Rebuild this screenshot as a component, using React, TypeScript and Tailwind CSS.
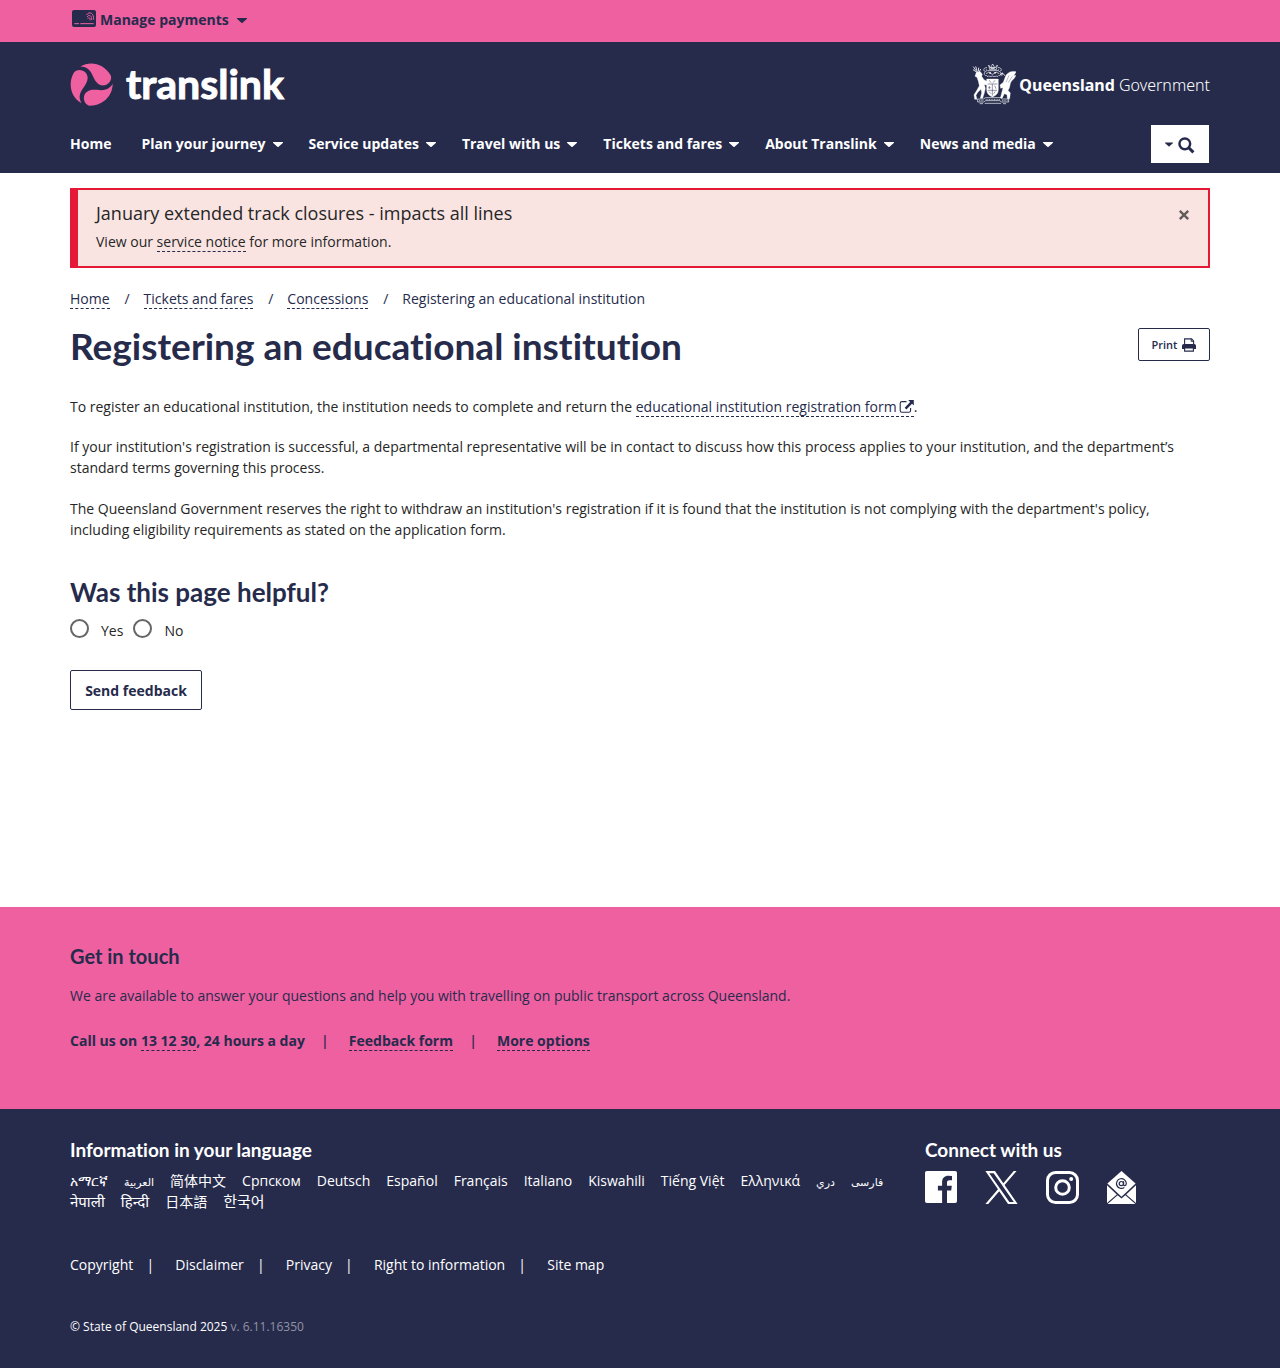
import React from "react";

const bodyFont = "font-['Open_Sans','Noto_Sans','DejaVu_Sans','Noto_Sans_CJK_SC',sans-serif]";
const headingFont = "font-['Lato','Open_Sans',sans-serif] [font-variant-ligatures:none]";
const container = "mx-auto w-full max-w-[1170px] px-[15px]";
const dashed = "border-b border-dashed border-[#262b4c]";

function Caret({ className = "h-[5px] w-2.5" }: { className?: string }) {
  return (
    <svg viewBox="0 0 10 5" className={`${className} shrink-0`} fill="currentColor" aria-hidden="true">
      <path d="M.6 0h8.8c.6 0 .8.5.4.9L5.6 4.7c-.3.4-.9.4-1.2 0L.2.9C-.2.5 0 0 .6 0z" />
    </svg>
  );
}

function CardIcon() {
  return (
    <svg viewBox="0 0 72 51" className="h-[17px] w-6" aria-hidden="true">
      <rect width="72" height="51" rx="6" fill="#262b4c" />
      <g stroke="#ef60a1" fill="none">
        <path d="M7 41h14M25 41h40" strokeWidth="3" />
        <g strokeWidth="3">
          <path d="M43 15c10-13 23-5 22 14" />
          <path d="M45 21c7-10 15-3 14 9" />
          <path d="M47 26c4-6 8-2 7 5" />
        </g>
      </g>
    </svg>
  );
}

function TranslinkMark() {
  const petal =
    "M143 82C143 120 112 148 75 148C60 147 53 130 57 117C62 103 76 98 95 100C116 103 132 101 143 82Z";
  return (
    <svg viewBox="14 19 130 130" className="size-[43px]" fill="#ef60a1" aria-hidden="true">
      <path d={petal} />
      <path d={petal} transform="rotate(120 79 84)" />
      <path d={petal} transform="rotate(240 79 84)" />
    </svg>
  );
}

function CoatOfArms() {
  return (
    <svg viewBox="9 9 132 126" className="h-[42px] w-11" fill="none" stroke="#fff" strokeWidth="3" aria-hidden="true">
      <path d="M13 20l8 12 11 8M12 29l12 8M20 19l4 13M29 23l-1 12M35 27l-5 11" strokeWidth="2.5" />
      <path fill="#fff" strokeWidth="1" d="M22 37l12-2 6 8-2 6 7 10 11 6-1 10-9-1 3 11-3 14-5 16h-7l4-17-2-10-9 8-6 10 3 12h-7l-2-14 9-14 7-13-3-13-4-12-6-3z" />
      <path fill="#fff" strokeWidth="1" d="M141 35c-14-3-28 3-32 15l-6 17-10 8 2 10 7-2-4 16-4 15h6l6-13 8 3 1 12h7l2-17-7-8c7-10 5-16 8-23 3-8 11-10 16-22l-7 1 7-10z" />
      <path d="M108 47l-8-8-7 5M101 39l-3 8" strokeWidth="2.5" />
      <path d="M120 46l-9 21M130 49l-12 19" stroke="#262b4c" strokeWidth="1" />
      <path strokeWidth="2" d="M54 23c-8-1-12 6-8 10s9 0 6-5M87 23c9-1 12 6 8 10s-9 0-6-5M48 36c-5 7 0 13 6 10M94 36c5 7 0 13-6 10M59 15l5 9 7-12 7 12 7-9-3 14H62zM55 32h32M51 41l8-4 11 6 12-6 9 4M54 50c7-5 10 3 16-2 7 5 11-3 17 2" />
      <path strokeWidth="4" d="M65 24h12M61 39h5M76 38h5" />
      <path fill="#fff" strokeWidth="1" d="M53 57h35v31c0 14-8 19-18 23-9-4-17-9-17-23z" />
      <path stroke="#262b4c" strokeWidth="1.5" d="M56 72h29M70 72v35M56 91h28M61 61l5 7M78 61l-6 7M61 78v9M58 83h7M77 77l4 9M79 94l-5 7M60 95l6 6" />
      <path strokeWidth="2" d="M26 117h18l5-4h45l5 4h20v9H98l-6-4H50l-6 4H26zM47 130h49M32 131h10M102 131h9" />
      <path strokeWidth="2" strokeDasharray="3 2" d="M50 119h43M30 122h14M99 122h17" />
    </svg>
  );
}

function SearchIcon() {
  return (
    <svg viewBox="0 0 18 18" className="size-[17px]" fill="none" stroke="#262b4c" aria-hidden="true">
      <circle cx="7.2" cy="7.2" r="5.7" strokeWidth="2.6" />
      <path d="M11.4 11.4l4.9 4.9" strokeWidth="3.2" />
    </svg>
  );
}

function PrintIcon() {
  return (
    <svg viewBox="0 0 14 14" className="size-3.5" aria-hidden="true">
      <path d="M2.6 6V.9h7l2 2V6" fill="none" stroke="#262b4c" strokeWidth="1.1" />
      <path d="M9.2 1v2.3h2.3" fill="none" stroke="#262b4c" />
      <path d="M1.8 6h10.4A1.8 1.8 0 0 1 14 7.8V11H0V7.8A1.8 1.8 0 0 1 1.8 6z" fill="#262b4c" />
      <path d="M2.6 10h8.8v3.1H2.6z" fill="#fff" stroke="#262b4c" strokeWidth="1.1" />
    </svg>
  );
}

function ExternalIcon() {
  return (
    <svg viewBox="0 0 15 13" className="-mt-1 ml-0.5 inline-block h-[13px] w-[15px] align-[-1px]" aria-hidden="true">
      <path d="M7.5 1.6H3A1.8 1.8 0 0 0 1.2 3.4v7A1.8 1.8 0 0 0 3 12.2h6.8a1.8 1.8 0 0 0 1.8-1.8V8" fill="none" stroke="#262b4c" strokeWidth="1.1" />
      <path d="M9.2 0h5.6v5.6L13 3.8 7.4 9.4 5.7 7.7 11.2 2z" fill="#262b4c" />
    </svg>
  );
}

const nav = ["Plan your journey", "Service updates", "Travel with us", "Tickets and fares", "About Translink", "News and media"];

const languages: { name: string; size?: string }[] = [
  { name: "አማርኛ" },
  { name: "العربية", size: "text-[11px]" },
  { name: "简体中文" },
  { name: "Српском" },
  { name: "Deutsch" },
  { name: "Español" },
  { name: "Français" },
  { name: "Italiano" },
  { name: "Kiswahili" },
  { name: "Tiếng Việt" },
  { name: "Ελληνικά" },
  { name: "دري", size: "text-[11px]" },
  { name: "فارسی", size: "text-[11px]" },
  { name: "नेपाली", size: "text-[15px]" },
  { name: "हिन्दी", size: "text-[15px]" },
  { name: "日本語" },
  { name: "한국어", size: "text-[15px]" },
];

const legal = ["Copyright", "Disclaimer", "Privacy", "Right to information", "Site map"];

function Header() {
  return (
    <header>
      <div className="bg-[#ef60a1]">
        <div className={`${container} flex h-[42px] items-start pt-2`}>
          <button className="flex items-center text-sm/6 font-bold text-[#262b4c]">
            <span className="mr-1 ml-0.5 -mt-1"><CardIcon /></span>
            Manage payments
            <span className="ml-2"><Caret /></span>
          </button>
        </div>
      </div>
      <div className="bg-[#262b4c] text-white">
        <div className={`${container} flex items-center justify-between pt-5`}>
          <a href="#home" className="flex items-center gap-[13px]" aria-label="Translink home">
            <TranslinkMark />
            <span className={`${headingFont} text-[41px]/[44px] font-bold [-webkit-text-stroke:1px_white]`}>translink</span>
          </a>
          <a href="#government" className="flex items-center gap-[3px] font-['Noto_Sans',sans-serif] text-base/6">
            <CoatOfArms />
            <span className="pt-0.5"><b className="font-bold">Queensland</b> <span className="font-light">Government</span></span>
          </a>
        </div>
        <nav className={`${container} flex items-center justify-between pt-[19px] pb-2.5`} aria-label="Main">
          <div className="flex items-center gap-[26px] text-sm/5 font-bold">
            <a href="#home" className="mr-1">Home</a>
            {nav.map((n) => (
              <button key={n} className="flex items-center gap-[7px]">{n}<Caret /></button>
            ))}
          </div>
          <button aria-label="Search" className="mr-px flex h-[38px] w-[58px] items-center justify-center gap-[5px] bg-white text-[#262b4c]">
            <Caret className="h-[5px] w-2" />
            <span className="mt-[3px]"><SearchIcon /></span>
          </button>
        </nav>
      </div>
    </header>
  );
}

export default function App() {
  return (
    <div className={`${bodyFont} flex min-h-screen flex-col bg-white text-sm/[21px] font-normal text-[#262626]`}>
      <Header />
      <main className={`${container} flex-1 pb-[197px]`}>
        <section role="alert" className="mt-[15px] flex items-start justify-between border-2 border-l-8 border-[#e51937] bg-[#f9e4e2] pt-[9px] pr-[18px] pb-3 pl-[18px]">
          <div>
            <h2 className="text-lg/7">January extended track closures - impacts all lines</h2>
            <p className="mt-[3px] leading-6">View our <a href="#notice" className={dashed}>service notice</a> for more information.</p>
          </div>
          <button aria-label="Close alert" className="mt-2.5">
            <svg viewBox="0 0 10 10" className="size-3" stroke="#625c5d" strokeWidth="2" aria-hidden="true"><path d="M1.5 1.5l7 7M8.5 1.5l-7 7" /></svg>
          </button>
        </section>
        <nav aria-label="Breadcrumb" className="mt-5 flex text-[#262b4c]">
          {["Home", "Tickets and fares", "Concessions"].map((b) => (
            <span key={b}>
              <a href="#crumb" className={dashed}>{b}</a>
              <span className="inline-block w-[34px] pl-px text-center">/</span>
            </span>
          ))}
          <span>Registering an educational institution</span>
        </nav>
        <div className="mt-[19px] flex items-start justify-between">
          <h1 className={`${headingFont} text-[37px]/9 font-bold text-[#262b4c]`}>Registering an educational institution</h1>
          <button className="flex h-[33px] w-[72px] items-center justify-center gap-[5px] rounded-xs border border-[#262b4c] text-[11px]/4 font-semibold text-[#262b4c]">
            Print <PrintIcon />
          </button>
        </div>
        <p className="mt-8">
          To register an educational institution, the institution needs to complete and return the{" "}
          <a href="#form" className={`${dashed} text-[#262b4c]`}>educational institution registration form<ExternalIcon /></a>.
        </p>
        <p className="mt-[19px]">
          If your institution's registration is successful, a departmental representative will be in contact to discuss how this process applies to your institution, and the department’s standard terms governing this process.
        </p>
        <p className="mt-5">
          The Queensland Government reserves the right to withdraw an institution's registration if it is found that the institution is not complying with the department's policy, including eligibility requirements as stated on the application form.
        </p>
        <form className="mt-9">
          <fieldset>
            <legend className={`${headingFont} text-[26px]/8 font-bold text-[#262b4c]`}>Was this page helpful?</legend>
            <div className="mt-[11px] flex gap-2.5">
              {["Yes", "No"].map((o) => (
                <label key={o} className="flex gap-3">
                  <input type="radio" name="helpful" className="size-[19px] appearance-none rounded-full border-2 border-[#666] bg-white" />
                  <span className="pt-px">{o}</span>
                </label>
              ))}
            </div>
          </fieldset>
          <button type="button" className="mt-[29px] h-10 w-[132px] rounded-xs border border-[#262b4c] font-bold text-[#262b4c]">Send feedback</button>
        </form>
      </main>
      <section className="bg-[#ef60a1] text-[#262b4c]">
        <div className={`${container} pt-[35px] pb-[58px]`}>
          <h2 className={`${headingFont} text-xl/7 font-bold`}>Get in touch</h2>
          <p className="mt-[15px]">We are available to answer your questions and help you with travelling on public transport across Queensland.</p>
          <p className="mt-6 font-bold">
            Call us on <a href="#call" className={dashed}>13 12 30</a>, 24 hours a day
            <span className="inline-block w-11 pr-1 text-center font-semibold">|</span>
            <a href="#feedback" className={dashed}>Feedback form</a>
            <span className="inline-block w-11 pr-1 text-center font-semibold">|</span>
            <a href="#options" className={dashed}>More options</a>
          </p>
        </div>
      </section>
      <footer className="bg-[#262b4c] text-white">
        <div className={`${container} pt-[27px] pb-[31px]`}>
          <div className="flex">
            <section className="w-3/4">
              <h2 className={`${headingFont} text-[19px]/7 font-bold`}>Information in your language</h2>
              <ul className="mt-1.5 flex flex-wrap gap-x-4 pr-8">
                {languages.map((l) => (
                  <li key={l.name} className="h-[21px]"><a href="#language" className={l.size}>{l.name}</a></li>
                ))}
              </ul>
            </section>
            <section className="w-1/4">
              <h2 className={`${headingFont} text-[19px]/7 font-bold`}>Connect with us</h2>
              <div className="mt-[7px] flex gap-7">
                <a href="#facebook" aria-label="Facebook">
                  <svg viewBox="0 0 32 32" className="size-8" fill="#fff"><path d="M1.8 0h28.4A1.8 1.8 0 0 1 32 1.8v28.4a1.8 1.8 0 0 1-1.8 1.8H22V19.6h4.2l.6-4.8H22v-3.1c0-1.4.4-2.4 2.4-2.4H27V5a34 34 0 0 0-3.7-.2c-3.7 0-6.2 2.2-6.2 6.4v3.6h-4.2v4.8h4.2V32H1.8A1.8 1.8 0 0 1 0 30.2V1.8A1.8 1.8 0 0 1 1.8 0z" /></svg>
                </a>
                <a href="#x" aria-label="X">
                  <svg viewBox="0 0 1200 1227" className="h-[33px] w-[33px]" fill="#fff"><path d="M714.163 519.284L1160.89 0H1055.03L667.137 450.887L357.328 0H0L468.492 681.821L0 1226.37H105.866L515.491 750.218L842.672 1226.37H1200L714.137 519.284H714.163ZM569.165 687.828L521.697 619.934L144.011 79.694H306.615L611.412 515.685L658.88 583.579L1055.08 1150.3H892.476L569.165 687.854V687.828Z" /></svg>
                </a>
                <a href="#instagram" aria-label="Instagram">
                  <svg viewBox="0 0 33 33" className="size-[33px]" fill="none" stroke="#fff" strokeWidth="3"><rect x="1.5" y="1.5" width="30" height="30" rx="8" /><circle cx="16.5" cy="16.5" r="6.8" /><circle cx="25.2" cy="7.9" r="2" fill="#fff" stroke="none" /></svg>
                </a>
                <a href="#newsletter" aria-label="Newsletter">
                  <svg viewBox="0 0 29 33" className="h-[33px] w-[29px]" fill="#fff">
                    <path d="M14.5 0L28.6 12.5 14.5 25.8.4 12.5z" />
                    <path d="M0 14.2l9.8 9.2L0 31.9zM29 14.2l-9.8 9.2 9.8 8.5zM10.6 24.3l3.9 3.2 3.9-3.2 10 8.7H.6z" />
                    <g fill="none" stroke="#262b4c" strokeWidth="1.2"><circle cx="14.3" cy="12.6" r="2.1" /><path d="M16.6 10.2v3.6c0 1.6 2.7 1.2 2.7-1.5a4.9 4.9 0 1 0-2 4.2" /></g>
                  </svg>
                </a>
              </div>
            </section>
          </div>
          <ul className="mt-[42px] flex">
            {legal.map((l, i) => (
              <li key={l} className="flex">
                <a href="#legal">{l}</a>
                {i < legal.length - 1 && <span className="w-[42px] pr-2 text-center">|</span>}
              </li>
            ))}
          </ul>
          <p className="mt-[41px] text-xs/[21px]">© State of Queensland 2025 <span className="text-[#9093a1]">v. 6.11.16350</span></p>
        </div>
      </footer>
    </div>
  );
}
